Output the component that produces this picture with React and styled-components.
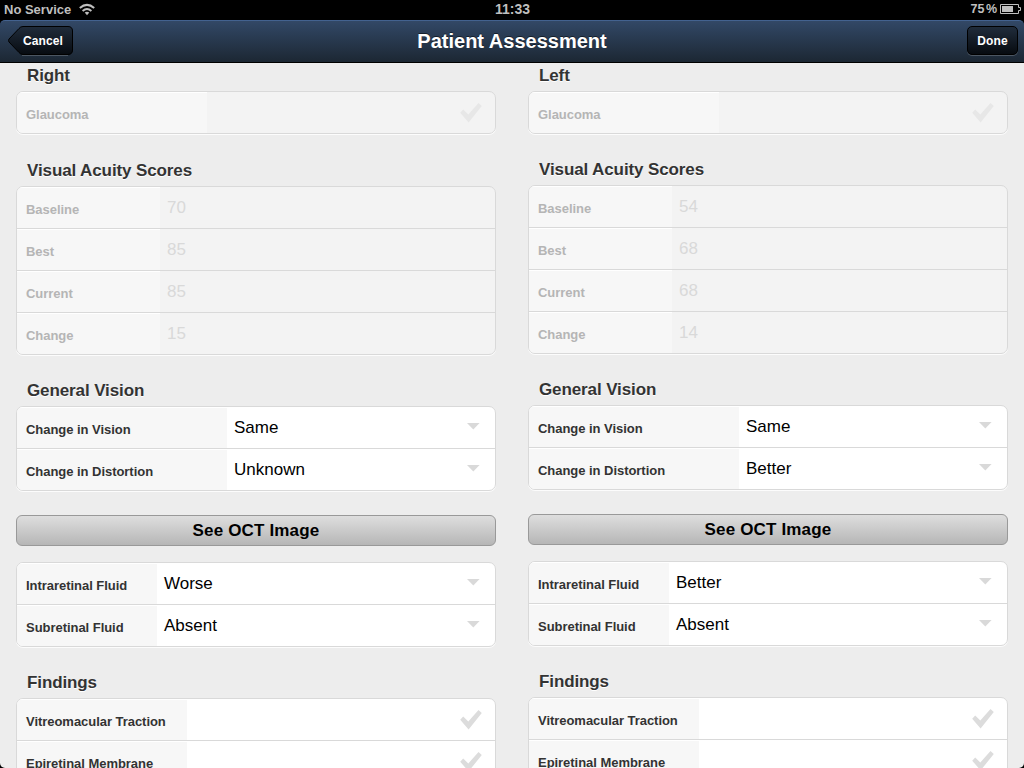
import React from 'react';
import styled, { createGlobalStyle } from 'styled-components';

const GlobalStyle = createGlobalStyle`
  * { box-sizing: border-box; }
  html, body { margin: 0; background: #000; overflow: hidden; }
  body { font-family: "Liberation Sans", Arial, Helvetica, sans-serif; }
`;

const Screen = styled.div`
  display: flex;
  flex-direction: column;
  width: 1024px;
  height: 768px;
  overflow: hidden;
  background: #000;
`;

const StatusBar = styled.header`
  display: grid;
  grid-template-columns: 1fr auto 1fr;
  flex: none;
  height: 20px;
  padding: 0 3px 0 4px;
  line-height: 19px;
  font-size: 13px;
  font-weight: bold;
  color: #bfbfbf;
`;

const StatusGroup = styled.div`
  display: flex;
  align-items: flex-start;
  justify-content: ${(p) => (p.$end ? 'flex-end' : 'flex-start')};
  white-space: nowrap;
  svg { display: block; flex: none; }
`;

const Carrier = styled.span`
  width: 75px;
`;

const Clock = styled.span`
  font-size: 14px;
`;

const Percent = styled.span`
  margin-right: 3px;
  font-size: 12.5px;
  word-spacing: -2px;
`;

const NavBar = styled.nav`
  display: grid;
  grid-template-columns: 1fr auto 1fr;
  align-items: start;
  flex: none;
  height: 43px;
  padding: 5px 6px 0 8px;
  border-top: 1px solid #43628f;
  border-bottom: 1px solid #000;
  border-radius: 5px 5px 0 0;
  background: linear-gradient(#324866, #1c2733);
`;

const Title = styled.h1`
  margin: 0 2px 0 0;
  font-size: 20px;
  line-height: 30px;
  color: #fff;
  text-shadow: 0 -1px 0 rgba(0, 0, 0, 0.5);
`;

const DoneButton = styled.button`
  justify-self: end;
  width: 51px;
  height: 29px;
  padding: 0;
  border: 1px solid #000;
  border-radius: 5px;
  background: linear-gradient(#202c3b, #070b10);
  box-shadow: 0 1px 0 rgba(255, 255, 255, 0.2);
  font: bold 12px/28px "Liberation Sans", Arial, sans-serif;
  letter-spacing: 0.1px;
  color: #fff;
`;

const BackButton = styled.button`
  position: relative;
  width: 65px;
  height: 30px;
  padding: 0 0 0 5px;
  border: 0;
  background: none;
  font: bold 12px/28px "Liberation Sans", Arial, sans-serif;
  letter-spacing: 0.1px;
  color: #fff;
`;

const BackShape = styled.svg`
  position: absolute;
  left: 0;
  top: 0;
`;

const ButtonText = styled.span`
  position: relative;
  display: block;
`;

const Content = styled.main`
  display: grid;
  grid-template-columns: 480px 480px;
  column-gap: 32px;
  align-items: start;
  flex: 1;
  min-height: 0;
  overflow: hidden;
  padding: 0 16px;
  background: #ededed;
  border-radius: 0 0 5px 5px;
`;

const Column = styled.section`
  display: flex;
  flex-direction: column;
`;

const Heading = styled.h2`
  margin: ${(p) => p.$gap}px 0 0;
  padding: 0 11px;
  height: 28px;
  font-size: 17px;
  letter-spacing: -0.11px;
  line-height: 25px;
  color: #333;
  text-shadow: 0 1px 0 #fff;
`;

const Card = styled.div`
  flex: none;
  margin-top: ${(p) => p.$gap || 0}px;
  border: 1px solid #d9d9d9;
  border-radius: 7px;
  overflow: hidden;
  background: ${(p) => (p.$disabled ? '#f3f3f3' : '#fff')};
  box-shadow: 0 1px 0 rgba(255, 255, 255, 0.8);
`;

const Row = styled.div`
  display: flex;
  height: 41px;
  & + & { height: 42px; border-top: 1px solid #d9d9d9; }
`;

const Label = styled.div`
  flex: none;
  width: ${(p) => p.$width}px;
  padding: 2px 0 0 9px;
  box-shadow: inset 0 1px 0 #fff;
  background: #f7f7f7;
  font-size: 13px;
  font-weight: bold;
  letter-spacing: -0.04px;
  line-height: 41px;
  white-space: nowrap;
  color: ${(p) => (p.$disabled ? '#b5b5b5' : '#333')};
`;

const Value = styled.div`
  flex: 1;
  padding-left: 7px;
  font-size: 17px;
  line-height: 41px;
  color: ${(p) => (p.$disabled ? '#d9d9d9' : '#000')};
`;

const Mark = styled.svg`
  display: block;
  flex: none;
  margin-top: ${(p) => p.$top}px;
  margin-right: ${(p) => p.$right}px;
`;

const OctButton = styled.button`
  flex: none;
  height: 31px;
  margin: 24px 0 0;
  padding: 0;
  border: 1px solid #999;
  border-radius: 6px;
  background: linear-gradient(#dedede, #b6b6b6);
  font: bold 17px/29px "Liberation Sans", Arial, sans-serif;
  letter-spacing: 0.16px;
  color: #000;
`;

const Check = ({ faded }) => (
  <Mark $top={11} $right={13} width="22" height="20" viewBox="0 0 22 20">
    <path d="M0.2 9.7 3.2 6.6 8.3 11.6 18.5 0 21.8 3 8.6 19.400Z" fill={faded ? '#e7e7e7' : '#dcdcdc'} />
  </Mark>
);

const Arrow = () => (
  <Mark $top={16} $right={15} width="13" height="7" viewBox="0 0 13 7">
    <path d="M0 0H12.600L6.300 6.500Z" fill="#d9d9d9" />
  </Mark>
);

const Group = ({ rows, width, disabled, kind, gap }) => (
  <Card $disabled={disabled} $gap={gap}>
    {rows.map(([label, value]) => (
      <Row key={label}>
        <Label $width={width} $disabled={disabled}>{label}</Label>
        <Value $disabled={disabled}>{value}</Value>
        {kind === 'check' && <Check faded={disabled} />}
        {kind === 'select' && <Arrow />}
      </Row>
    ))}
  </Card>
);

const Eye = ({ side, acuityGap, scores, vision, distortion, intraretinal, subretinal }) => (
  <Column>
    <Heading $gap={0}>{side}</Heading>
    <Group kind="check" disabled width={190} rows={[['Glaucoma']]} />
    <Heading $gap={acuityGap}>Visual Acuity Scores</Heading>
    <Group
      disabled
      width={143}
      rows={['Baseline', 'Best', 'Current', 'Change'].map((name, i) => [name, scores[i]])}
    />
    <Heading $gap={23}>General Vision</Heading>
    <Group
      kind="select"
      width={210}
      rows={[['Change in Vision', vision], ['Change in Distortion', distortion]]}
    />
    <OctButton>See OCT Image</OctButton>
    <Group
      kind="select"
      gap={16}
      width={140}
      rows={[['Intraretinal Fluid', intraretinal], ['Subretinal Fluid', subretinal]]}
    />
    <Heading $gap={23}>Findings</Heading>
    <Group kind="check" width={170} rows={[['Vitreomacular Traction'], ['Epiretinal Membrane']]} />
  </Column>
);

export default function App() {
  return (
    <>
      <GlobalStyle />
      <Screen>
        <StatusBar>
          <StatusGroup>
            <Carrier>No Service</Carrier>
            <svg width="17" height="16" viewBox="0 0 17 16" fill="none" stroke="#bfbfbf" strokeWidth="2">
              <path d="M0.800 8Q8 1.800 15.200 8" />
              <path d="M3.600 10.900Q8 7.200 12.400 10.900" />
              <path d="M5.700 12.600Q8 10.800 10.300 12.600L8 15.200Z" fill="#bfbfbf" stroke="none" />
            </svg>
          </StatusGroup>
          <Clock>11:33</Clock>
          <StatusGroup $end>
            <Percent>75 %</Percent>
            <svg width="21" height="16" viewBox="0 0 21 16">
              <path d="M0.5 4.5H18.5V7.5H20.5V10.5H18.5V13.5H0.5Z" fill="none" stroke="#bfbfbf" />
              <rect x="2" y="6" width="11" height="6" fill="#bfbfbf" />
            </svg>
          </StatusGroup>
        </StatusBar>
        <NavBar>
          <BackButton>
            <BackShape width="65" height="30" viewBox="0 0 65 30">
              <defs>
                <linearGradient id="back" x1="0" y1="0" x2="0" y2="1">
                  <stop offset="0" stopColor="#202c3b" />
                  <stop offset="1" stopColor="#070b10" />
                </linearGradient>
              </defs>
              <path d="M14 29.5H60" stroke="#fff" strokeOpacity=".2" />
              <path
                d="M15 .5H60Q64.500 .5 64.500 5V24Q64.500 28.500 60 28.500H15Q12.500 28.500 11 26.500L1 16Q0 14.500 1 13L11 2.500Q12.500 .5 15 .5Z"
                fill="url(#back)"
                stroke="#000"
              />
            </BackShape>
            <ButtonText>Cancel</ButtonText>
          </BackButton>
          <Title>Patient Assessment</Title>
          <DoneButton>Done</DoneButton>
        </NavBar>
        <Content>
          <Eye
            side="Right"
            acuityGap={24}
            scores={['70', '85', '85', '15']}
            vision="Same"
            distortion="Unknown"
            intraretinal="Worse"
            subretinal="Absent"
          />
          <Eye
            side="Left"
            acuityGap={23}
            scores={['54', '68', '68', '14']}
            vision="Same"
            distortion="Better"
            intraretinal="Better"
            subretinal="Absent"
          />
        </Content>
      </Screen>
    </>
  );
}
